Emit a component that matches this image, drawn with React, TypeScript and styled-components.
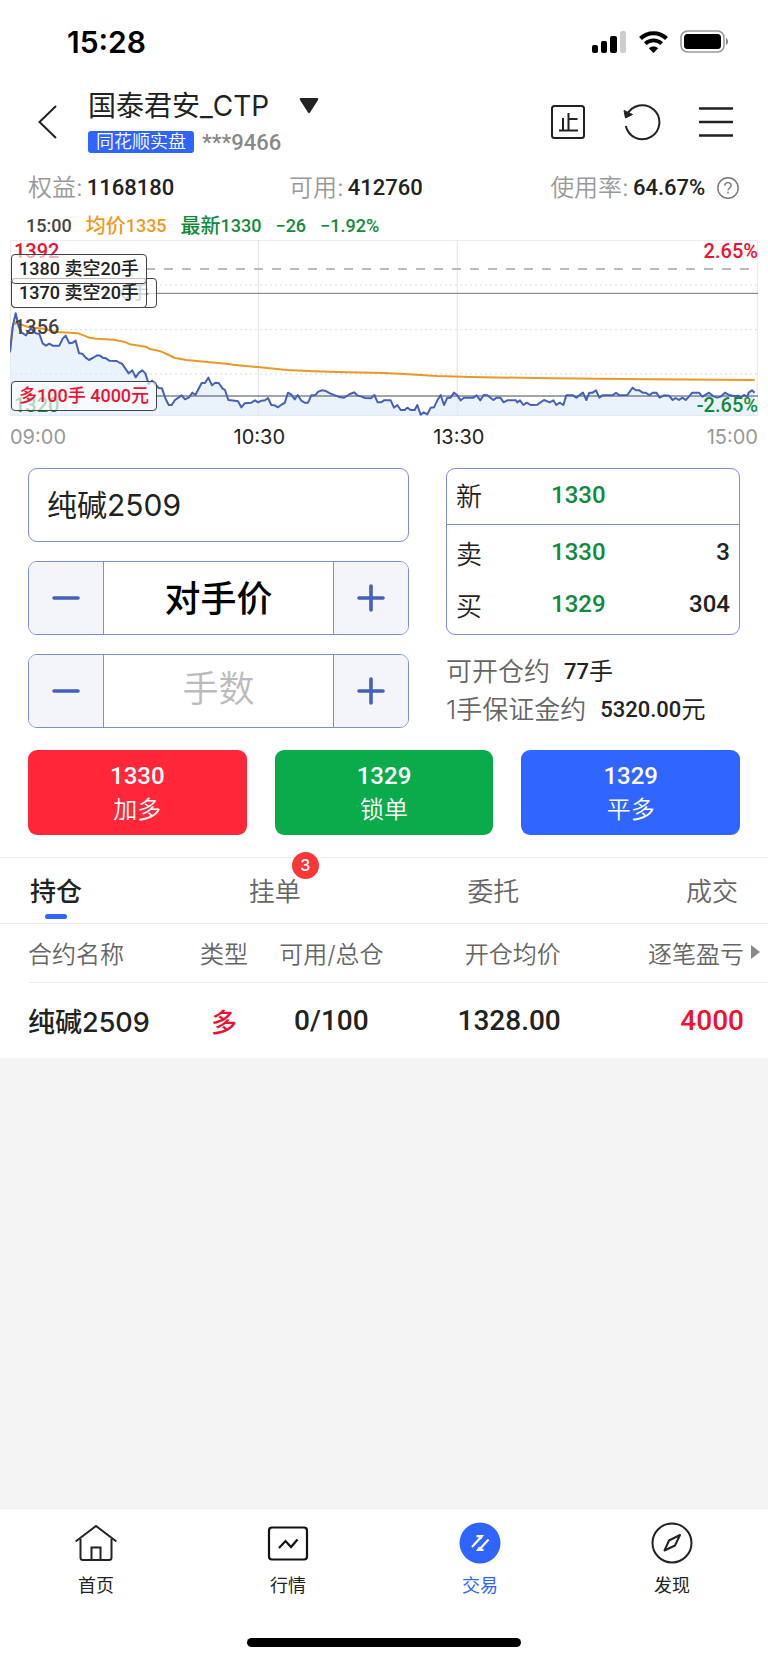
import React, { useState } from "react";
import styled, { createGlobalStyle, css } from "styled-components";

const color = {
  ink: "#222222",
  mid: "#666666",
  soft: "#999999",
  red: "#f01030",
  green: "#128a3c",
  orange: "#ee9a1c",
  blue: "#2f64ff",
  frame: "#7b8fd0",
  rule: "#eeeeee",
};

const cjk = `"Noto Sans CJK SC", sans-serif`;
const textFont = `Inter, ${cjk}`;
const numFont = `Roboto, ${cjk}`;

const GlobalStyle = createGlobalStyle`
  *, *::before, *::after { box-sizing: border-box; }
  body { margin: 0; background: #ffffff; }
  button, input { font: inherit; color: inherit; margin: 0; padding: 0; border: 0; background: none; border-radius: 0; }
  button { cursor: pointer; }
  a { color: inherit; text-decoration: none; }
  svg { display: block; }
`;

const Page = styled.div`
  min-height: 100vh;
  display: flex;
  flex-direction: column;
  background: #ffffff;
  color: ${color.ink};
  font-family: ${textFont};
  font-size: 24px;
`;

const Num = styled.span<{ $size?: number; $color?: string }>`
  font-family: ${numFont};
  font-weight: 500;
  font-size: ${(p) => p.$size ?? 22}px;
  ${(p) => p.$color && css`color: ${p.$color};`}
`;

/* ---------- status bar ---------- */

const StatusBar = styled.div`
  height: 84px;
  padding: 0 38px 0 67px;
  display: flex;
  align-items: center;
  justify-content: space-between;
  color: #000000;
`;

const Clock = styled.time`
  font-size: 30px;
  font-weight: 600;
  line-height: 36px;
`;

const StatusIcons = styled.div`
  display: flex;
  align-items: center;
  gap: 12px;
`;

/* ---------- header ---------- */

const Header = styled.header`
  padding: 6px 35px 20px 38px;
  display: flex;
  align-items: center;
`;

const Account = styled.div`
  flex: 1;
  margin-left: 31px;
  display: flex;
  flex-direction: column;
  gap: 8px;
`;

const AccountPicker = styled.button`
  align-self: flex-start;
  display: flex;
  align-items: center;
  gap: 30px;
  font-size: 28px;
  line-height: 32px;
`;

const AccountMeta = styled.div`
  display: flex;
  align-items: center;
  gap: 8px;
  height: 24px;
  color: #888888;
`;

const BrokerTag = styled.span`
  padding: 0 8px;
  border-radius: 3px;
  background: ${color.blue};
  color: #ffffff;
  font-size: 18px;
  line-height: 22px;
  font-weight: 350;
`;

const Tools = styled.div`
  display: flex;
  align-items: center;
  gap: 38px;
`;

/* ---------- funds ---------- */

const Funds = styled.dl`
  margin: 0;
  padding: 0 28px;
  display: grid;
  grid-template-columns: 11fr 11fr 8fr;
  line-height: 28px;
`;

const Fund = styled.div`
  display: flex;
  align-items: center;
  white-space: nowrap;

  dt { color: ${color.soft}; font-weight: 350; margin-right: 4px; }
  dd { margin: 0; display: flex; align-items: center; gap: 12px; }
`;

/* ---------- chart ---------- */

const Quote = styled.div`
  margin-top: 12px;
  padding: 0 26px;
  display: flex;
  align-items: center;
  gap: 14px;
  font-size: 20px;
  line-height: 24px;
  font-weight: 500;
  white-space: nowrap;
`;

const QuoteItem = styled.span<{ $color: string }>`
  display: flex;
  align-items: center;
  color: ${(p) => p.$color};
`;

const Chart = styled.section`
  margin: 2px 10px 0;
`;

const Plot = styled.div`
  position: relative;
  height: 176px;

  > svg { width: 100%; height: 100%; }
`;

const AxisValue = styled.span<{ $top: number; $side: "left" | "right"; $color: string }>`
  position: absolute;
  top: ${(p) => p.$top}px;
  ${(p) => (p.$side === "left" ? "left: 4px;" : "right: 0;")}
  color: ${(p) => p.$color};
  font: 500 20px/22px ${numFont};
`;

const OrderTag = styled.span<{ $top: number; $tone?: "red" | "ghost" }>`
  position: absolute;
  left: 1px;
  top: ${(p) => p.$top}px;
  padding: 0 7px;
  border: 1px solid #444444;
  border-radius: 4px;
  background: rgba(255, 255, 255, 0.66);
  font: 500 18px/28px ${numFont};
  color: ${(p) => (p.$tone === "red" ? color.red : p.$tone === "ghost" ? "#888888" : color.ink)};
  white-space: nowrap;
`;

const TimeAxis = styled.div`
  margin-top: 7px;
  display: grid;
  grid-template-columns: 3fr 4fr 4fr 4fr;
  font-size: 20px;
  line-height: 28px;
  text-align: center;

  span:first-child { text-align: left; color: ${color.soft}; }
  span:last-child { text-align: right; color: ${color.soft}; }
`;

/* ---------- order form ---------- */

const OrderForm = styled.form`
  margin: 17px 28px 22px;
`;

const FormColumns = styled.div`
  display: grid;
  grid-template-columns: minmax(0, 381fr) minmax(0, 294fr);
  gap: 37px;
`;

const Fields = styled.div`
  display: flex;
  flex-direction: column;
  gap: 19px;
`;

const frame = css`
  border: 1px solid ${color.frame};
  border-radius: 9px;
  overflow: hidden;
`;

const ContractInput = styled.input`
  ${frame}
  width: 100%;
  height: 74px;
  padding: 0 18px 4px;
  font-size: 30px;
`;

const Stepper = styled.div`
  ${frame}
  height: 74px;
  display: flex;
`;

const StepButton = styled.button`
  width: 74px;
  display: grid;
  place-items: center;
  background: #f3f5fb;
`;

const StepInput = styled.input<{ $strong?: boolean }>`
  flex: 1;
  min-width: 0;
  padding-bottom: 4px;
  border: solid ${color.frame};
  border-width: 0 1px;
  text-align: center;
  font-size: 36px;
  font-weight: ${(p) => (p.$strong ? 500 : 350)};
  color: #000000;

  &::placeholder { color: #bbbbbb; opacity: 1; }
`;

const Book = styled.div`
  ${frame}
  height: 167px;
`;

const BookRow = styled.div`
  display: grid;
  grid-template-columns: 95px 1fr 1fr;
  align-items: center;
  padding: 2px 9px 0;
  height: 52px;
  font-size: 26px;
  font-weight: 350;

  > :last-child { text-align: right; }
`;

const LatestRow = styled(BookRow)`
  height: 56px;
  padding: 0 9px 4px;
  border-bottom: 1px solid ${color.frame};
`;

const Limits = styled.div`
  margin-top: 19px;
  display: grid;
  gap: 2px;
`;

const Limit = styled.div`
  height: 36px;
  display: flex;
  align-items: center;
  gap: 14px;
  font-size: 26px;
  line-height: 36px;
  font-weight: 350;
  color: ${color.mid};
  white-space: nowrap;

  strong { display: flex; align-items: center; font-weight: 400; font-size: 24px; color: ${color.ink}; }
`;

const Actions = styled.div`
  margin-top: 22px;
  display: grid;
  grid-template-columns: repeat(3, 1fr);
  gap: 28px;
`;

const ActionButton = styled.button<{ $bg: string }>`
  height: 85px;
  display: flex;
  flex-direction: column;
  align-items: center;
  justify-content: center;
  border-radius: 9px;
  background: ${(p) => p.$bg};
  color: #ffffff;
  font-size: 24px;
  line-height: 34px;
  font-weight: 350;
`;

/* ---------- tabs and positions ---------- */

const Tabs = styled.div`
  height: 67px;
  padding: 0 30px;
  display: flex;
  justify-content: space-between;
  border: solid ${color.rule};
  border-width: 1px 0;
`;

const Tab = styled.button<{ $active: boolean }>`
  position: relative;
  padding-bottom: 2px;
  font-size: 26px;
  font-weight: ${(p) => (p.$active ? 500 : 350)};
  color: ${(p) => (p.$active ? color.ink : color.mid)};

  ${(p) =>
    p.$active &&
    css`
      &::after {
        content: "";
        position: absolute;
        left: 15px;
        bottom: 4px;
        width: 22px;
        height: 5px;
        border-radius: 3px;
        background: ${color.blue};
      }
    `}
`;

const Badge = styled.span`
  position: absolute;
  top: -6px;
  right: -18px;
  width: 27px;
  height: 27px;
  border-radius: 50%;
  background: #f83838;
  color: #ffffff;
  font-size: 16px;
  line-height: 27px;
  font-weight: 500;
`;

const Positions = styled.table`
  margin-left: 28px;
  width: calc(100% - 28px);
  table-layout: fixed;
  border-collapse: separate;
  border-spacing: 0;
  white-space: nowrap;
`;

const Cell = styled.td<{ $align?: string; $end?: boolean }>`
  height: 75px;
  padding: 0 ${(p) => (p.$end ? 24 : 0)}px 0 0;
  text-align: ${(p) => p.$align ?? "left"};
  font-size: 27px;
  font-weight: 500;
`;

const HeadCell = styled.th<{ $align?: string; $end?: boolean }>`
  height: 59px;
  padding: 0 ${(p) => (p.$end ? 8 : 0)}px 2px 0;
  border-bottom: 1px solid ${color.rule};
  text-align: ${(p) => p.$align ?? "left"};
  font-size: 24px;
  font-weight: 350;
  color: ${color.mid};
`;

const MoreHead = styled.span`
  display: flex;
  justify-content: flex-end;
  align-items: center;
  gap: 7px;
`;

const Empty = styled.div`
  flex: 1;
  background: #f4f4f4;
`;

/* ---------- bottom navigation ---------- */

const Nav = styled.nav`
  display: grid;
  grid-template-columns: repeat(4, 1fr);
  border-top: 1px solid ${color.rule};
`;

const NavLink = styled.a<{ $active?: boolean }>`
  padding-top: 13px;
  display: flex;
  flex-direction: column;
  align-items: center;
  gap: 10px;
  font-size: 18px;
  line-height: 24px;
  color: ${(p) => (p.$active ? color.blue : color.ink)};
`;

const HomeIndicator = styled.div`
  width: 274px;
  height: 9px;
  margin: 40px auto 16px;
  border-radius: 5px;
  background: #000000;
`;

/* ---------- chart data ---------- */

const PRICE =
  "30,365 38,290 47,250 56,290 65,308 78,316 92,295 100,303 108,310 118,312 128,340 138,347 148,341 158,347 178,347 188,326 197,317 208,340 218,338 227,332 237,370 247,371 257,383 267,390 278,384 291,376 300,377 308,383 318,385 328,392 350,393 360,399 366,401 386,430 397,421 407,442 417,428 427,421 436,430 446,462 456,452 476,474 486,475 497,507 506,525 515,525 525,510 545,496 555,508 567,502 577,488 586,495 605,459 615,459 625,443 636,466 646,458 656,459 668,476 675,480 685,510 705,512 714,514 724,532 734,520 754,518 765,511 774,517 784,512 795,511 804,504 814,525 824,526 834,532 844,524 854,519 864,488 874,494 884,508 893,495 904,512 914,518 924,518 934,496 945,496 955,485 965,481 975,482 990,490 1005,496 1015,500 1032,503 1050,492 1062,487 1072,496 1085,500 1095,504 1113,505 1123,495 1133,517 1143,517 1152,511 1172,511 1182,533 1192,525 1202,540 1214,540 1222,533 1232,540 1244,540 1252,525 1262,554 1271,547 1282,553 1292,533 1302,532 1312,511 1322,495 1332,525 1342,503 1352,503 1362,488 1372,496 1382,511 1392,503 1420,503 1430,496 1441,511 1451,495 1462,496 1480,510 1490,503 1501,503 1511,517 1522,511 1548,511 1552,517 1560,511 1570,525 1580,518 1592,525 1612,524 1632,510 1649,517 1660,511 1669,525 1679,518 1690,525 1699,496 1719,496 1729,503 1749,488 1759,510 1768,488 1778,488 1788,481 1798,503 1808,496 1838,496 1848,488 1858,496 1882,495 1898,473 1908,481 1918,481 1928,488 1938,488 1948,496 1958,488 1969,488 1979,503 1992,496 2007,497 2018,510 2027,504 2037,510 2047,503 2057,510 2064,503 2077,488 2097,488 2107,500 2127,488 2142,500 2152,503 2162,500 2175,488 2187,495 2202,498 2214,497 2222,503 2232,495 2242,500 2246,488 2256,481 2264,488";

const AVERAGE =
  "30,368 36,310 40,282 48,280 62,283 80,290 130,296 170,306 235,310 268,323 290,326 340,329 372,335 390,343 437,350 450,357 482,364 500,372 525,384 560,390 630,397 680,401 700,404 780,412 860,420 940,424 1040,427 1152,429 1212,432 1312,438 1412,441 1652,445 1952,448 2264,450";

function PriceChart() {
  const thin = { vectorEffect: "non-scaling-stroke" as const, fill: "none" };
  return (
    <svg viewBox="30 30 2244 528" preserveAspectRatio="none" role="img" aria-label="分时图">
      <rect x="31" y="31" width="2241" height="525" stroke="#e6e8f2" strokeWidth="1" {...thin} />
      <path d="M775 30V558M1372 30V558" stroke="#e0e2ea" strokeWidth="1" {...thin} />
      <path d="M30 165H2274M30 299H2274M30 432H2274" stroke="#dcdcdc" strokeWidth="1" strokeDasharray="2 3" {...thin} />
      <polygon points={`30,558 ${PRICE} 2264,558`} fill="#dce9fa" fillOpacity="0.6" />
      <path d="M438 117H2274" stroke="#bbbbbb" strokeWidth="2" strokeDasharray="9 9" {...thin} />
      <path d="M438 190H2274" stroke="#777777" strokeWidth="1" {...thin} />
      <path d="M467 498H2274" stroke="#444a55" strokeWidth="1" {...thin} />
      <polyline points={AVERAGE} stroke="#e79a26" strokeWidth="2" strokeLinejoin="round" {...thin} />
      <polyline points={PRICE} stroke="#4560b8" strokeWidth="2" strokeLinejoin="round" {...thin} />
    </svg>
  );
}

/* ---------- icons ---------- */

const SignalIcon = () => (
  <svg width="35" height="22" viewBox="0 0 35 22" aria-hidden="true">
    <rect x="0" y="14" width="6" height="8" rx="2" />
    <rect x="9" y="10" width="6" height="12" rx="2" />
    <rect x="18" y="5" width="7" height="17" rx="2" />
    <rect x="28" y="0" width="6" height="22" rx="2" fill="#cccccc" />
  </svg>
);

const WifiIcon = () => (
  <svg width="29" height="22" viewBox="0 0 29 22" aria-hidden="true">
    <path d="M1.500 7.500C8.800.500 20.200.500 27.500 7.500" fill="none" stroke="#000" strokeWidth="4.200" />
    <path d="M6.300 12.600C11 8.300 18 8.300 22.700 12.600" fill="none" stroke="#000" strokeWidth="3.800" />
    <path d="M14.500 22L9.800 17.200C12.400 14.800 16.600 14.800 19.200 17.200Z" />
  </svg>
);

const BatteryIcon = () => (
  <svg width="50" height="24" viewBox="0 0 50 24" aria-hidden="true">
    <rect x="1" y="1" width="43" height="21" rx="6.500" fill="none" stroke="#9a9a9a" strokeWidth="1.600" />
    <rect x="4" y="4" width="37" height="15" rx="3.500" />
    <path d="M46 8C48.800 9 48.800 14 46 15Z" fill="#8a8a8a" />
  </svg>
);

const BackIcon = () => (
  <svg width="19" height="34" viewBox="0 0 19 34" fill="none" stroke="#222" strokeWidth="2" aria-hidden="true">
    <path d="M18 1L1.500 17L18 33" />
  </svg>
);

const CaretIcon = () => (
  <svg width="20" height="16" viewBox="0 0 20 16" fill="#222" aria-hidden="true">
    <path d="M1.500 0H18.500Q20 .5 19 2L11 14.500Q10 16 9 14.500L1 2Q0 .5 1.500 0Z" />
  </svg>
);

const StopIcon = () => (
  <svg width="34" height="34" viewBox="0 0 34 34" fill="none" stroke="#222" strokeWidth="2" aria-hidden="true">
    <rect x="1" y="1" width="32" height="32" rx="2.500" />
    <path d="M8 25.500H27M12 13V25M17.500 8V25M17.500 14H26.500" />
  </svg>
);

const RefreshIcon = () => (
  <svg width="38" height="38" viewBox="0 0 38 38" fill="none" stroke="#222" strokeWidth="2" aria-hidden="true">
    <path d="M4 12A17 17 0 1 1 2.800 23" />
    <path d="M1 7.500L2.500 15L9.500 11.500Z" fill="#222" strokeLinejoin="round" strokeWidth="1" />
  </svg>
);

const MenuIcon = () => (
  <svg width="34" height="32" viewBox="0 0 34 32" stroke="#222" strokeWidth="2.400" aria-hidden="true">
    <path d="M0 2.500H34M0 16H34M0 29.500H34" />
  </svg>
);

const HelpIcon = () => (
  <svg width="22" height="22" viewBox="0 0 22 22" fill="none" stroke="#777" strokeWidth="1.400" aria-hidden="true">
    <circle cx="11" cy="11" r="10.200" />
    <path d="M7.800 8.700C7.800 4.600 14.200 4.600 14.200 8.600C14.200 11 11 11 11 13.300M11 14.800V16.600" />
  </svg>
);

const StepIcon = ({ plus }: { plus?: boolean }) => (
  <svg width="28" height="28" viewBox="0 0 28 28" stroke="#4560b8" strokeWidth="3.600" strokeLinecap="round" aria-hidden="true">
    <path d={plus ? "M2 14H26M14 2V26" : "M2 14H26"} />
  </svg>
);

const MoreIcon = () => (
  <svg width="9" height="14" viewBox="0 0 9 14" fill="#8a8a8a" aria-hidden="true">
    <path d="M0 0L9 7L0 14Z" />
  </svg>
);

const HomeIcon = () => (
  <svg width="42" height="42" viewBox="0 0 42 42" fill="none" stroke="#222" strokeWidth="2" aria-hidden="true">
    <path d="M.6 19.500L21 4L41.400 19.500" />
    <path d="M5.500 17V35.500Q5.500 38 8 38H34Q36.500 38 36.500 35.500V17M16.500 38V25.500H25.500V38" />
  </svg>
);

const MarketIcon = () => (
  <svg width="42" height="42" viewBox="0 0 42 42" fill="none" stroke="#111" strokeWidth="2.200" aria-hidden="true">
    <rect x="2" y="5.500" width="38" height="32" rx="3" />
    <path d="M12 26L18.500 19L24 25L30.500 17.500" />
  </svg>
);

const TradeIcon = () => (
  <svg width="42" height="42" viewBox="0 0 42 42" fill="none" aria-hidden="true">
    <circle cx="21" cy="21" r="20.500" fill={color.blue} />
    <path d="M13 25L22.500 14.500M29.500 17.500L20 28" stroke="#fff" strokeWidth="2.200" />
    <path d="M17.500 13H25L21.800 17.800L20.600 15.200H17.500ZM24.500 29H17L20.200 24.200L21.400 26.800H24.500Z" fill="#fff" />
  </svg>
);

const DiscoverIcon = () => (
  <svg width="42" height="42" viewBox="0 0 42 42" fill="none" stroke="#222" strokeWidth="2" aria-hidden="true">
    <circle cx="21" cy="21" r="19.500" />
    <path d="M29 13L18 18.500L13.500 28.500L24 23.500Z" strokeLinejoin="round" />
  </svg>
);

/* ---------- page ---------- */

const TABS = [
  { label: "持仓" },
  { label: "挂单", count: 3 },
  { label: "委托" },
  { label: "成交" },
];

const ACTIONS = [
  { price: "1330", label: "加多", bg: "#ff2738" },
  { price: "1329", label: "锁单", bg: "#0aab4b" },
  { price: "1329", label: "平多", bg: "#3165ff" },
];

const NAV = [
  { label: "首页", icon: <HomeIcon /> },
  { label: "行情", icon: <MarketIcon /> },
  { label: "交易", icon: <TradeIcon />, active: true },
  { label: "发现", icon: <DiscoverIcon /> },
];

export default function App() {
  const [tab, setTab] = useState(0);

  return (
    <Page>
      <GlobalStyle />

      <StatusBar>
        <Clock>15:28</Clock>
        <StatusIcons>
          <SignalIcon />
          <WifiIcon />
          <BatteryIcon />
        </StatusIcons>
      </StatusBar>

      <Header>
        <button type="button" aria-label="返回"><BackIcon /></button>
        <Account>
          <AccountPicker type="button">
            国泰君安_CTP
            <CaretIcon />
          </AccountPicker>
          <AccountMeta>
            <BrokerTag>同花顺实盘</BrokerTag>
            <Num>***9466</Num>
          </AccountMeta>
        </Account>
        <Tools>
          <button type="button" aria-label="止损"><StopIcon /></button>
          <button type="button" aria-label="刷新"><RefreshIcon /></button>
          <button type="button" aria-label="菜单"><MenuIcon /></button>
        </Tools>
      </Header>

      <Funds>
        <Fund>
          <dt>权益:</dt>
          <dd><Num>1168180</Num></dd>
        </Fund>
        <Fund>
          <dt>可用:</dt>
          <dd><Num>412760</Num></dd>
        </Fund>
        <Fund>
          <dt>使用率:</dt>
          <dd>
            <Num>64.67%</Num>
            <button type="button" aria-label="说明"><HelpIcon /></button>
          </dd>
        </Fund>
      </Funds>

      <Quote>
        <Num $size={18} $color="#444444">15:00</Num>
        <QuoteItem $color={color.orange}>均价<Num $size={18}>1335</Num></QuoteItem>
        <QuoteItem $color={color.green}>最新<Num $size={18}>1330</Num></QuoteItem>
        <Num $size={18} $color={color.green}>−26</Num>
        <Num $size={18} $color={color.green}>−1.92%</Num>
      </Quote>

      <Chart>
        <Plot>
          <PriceChart />
          <AxisValue $top={0} $side="left" $color={color.red}>1392</AxisValue>
          <AxisValue $top={76} $side="left" $color="#444444">1356</AxisValue>
          <AxisValue $top={154} $side="left" $color={color.green}>1320</AxisValue>
          <AxisValue $top={0} $side="right" $color={color.red}>2.65%</AxisValue>
          <AxisValue $top={154} $side="right" $color={color.green}>-2.65%</AxisValue>
          <OrderTag $top={38} $tone="ghost">1370 卖空100手</OrderTag>
          <OrderTag $top={38}>1370 卖空20手</OrderTag>
          <OrderTag $top={14}>1380 卖空20手</OrderTag>
          <OrderTag $top={141} $tone="red">多100手 4000元</OrderTag>
        </Plot>
        <TimeAxis>
          <span>09:00</span>
          <span>10:30</span>
          <span>13:30</span>
          <span>15:00</span>
        </TimeAxis>
      </Chart>

      <OrderForm onSubmit={(e) => e.preventDefault()}>
        <FormColumns>
          <Fields>
            <ContractInput aria-label="合约" defaultValue="纯碱2509" />
            <Stepper>
              <StepButton type="button" aria-label="降低价格"><StepIcon /></StepButton>
              <StepInput $strong aria-label="价格" defaultValue="对手价" />
              <StepButton type="button" aria-label="提高价格"><StepIcon plus /></StepButton>
            </Stepper>
            <Stepper>
              <StepButton type="button" aria-label="减少手数"><StepIcon /></StepButton>
              <StepInput aria-label="手数" placeholder="手数" />
              <StepButton type="button" aria-label="增加手数"><StepIcon plus /></StepButton>
            </Stepper>
          </Fields>
          <div>
            <Book>
              <LatestRow>
                <span>新</span>
                <Num $size={24} $color={color.green}>1330</Num>
                <span />
              </LatestRow>
              <BookRow>
                <span>卖</span>
                <Num $size={24} $color={color.green}>1330</Num>
                <Num $size={24}>3</Num>
              </BookRow>
              <BookRow>
                <span>买</span>
                <Num $size={24} $color={color.green}>1329</Num>
                <Num $size={24}>304</Num>
              </BookRow>
            </Book>
            <Limits>
              <Limit>
                可开仓约 <strong><Num>77</Num>手</strong>
              </Limit>
              <Limit>
                1手保证金约 <strong><Num>5320.00</Num>元</strong>
              </Limit>
            </Limits>
          </div>
        </FormColumns>
        <Actions>
          {ACTIONS.map((a) => (
            <ActionButton key={a.label} type="button" $bg={a.bg}>
              <Num $size={24}>{a.price}</Num>
              {a.label}
            </ActionButton>
          ))}
        </Actions>
      </OrderForm>

      <Tabs role="tablist">
        {TABS.map((t, i) => (
          <Tab key={t.label} type="button" role="tab" aria-selected={tab === i} $active={tab === i} onClick={() => setTab(i)}>
            {t.label}
            {t.count && <Badge>{t.count}</Badge>}
          </Tab>
        ))}
      </Tabs>

      <Positions>
        <colgroup>
          <col style={{ width: "21%" }} />
          <col style={{ width: "11%" }} />
          <col style={{ width: "18%" }} />
          <col style={{ width: "22%" }} />
          <col style={{ width: "28%" }} />
        </colgroup>
        <thead>
          <tr>
            <HeadCell>合约名称</HeadCell>
            <HeadCell $align="center">类型</HeadCell>
            <HeadCell $align="center">可用/总仓</HeadCell>
            <HeadCell $align="right">开仓均价</HeadCell>
            <HeadCell $end>
              <MoreHead>逐笔盈亏<MoreIcon /></MoreHead>
            </HeadCell>
          </tr>
        </thead>
        <tbody>
          <tr>
            <Cell>纯碱2509</Cell>
            <Cell $align="center"><Num $size={26} $color={color.red}>多</Num></Cell>
            <Cell $align="center"><Num $size={28}>0/100</Num></Cell>
            <Cell $align="right"><Num $size={28}>1328.00</Num></Cell>
            <Cell $align="right" $end><Num $size={28} $color={color.red}>4000</Num></Cell>
          </tr>
        </tbody>
      </Positions>

      <Empty />

      <Nav>
        {NAV.map((n) => (
          <NavLink key={n.label} href="#" $active={n.active} aria-current={n.active ? "page" : undefined}>
            {n.icon}
            {n.label}
          </NavLink>
        ))}
      </Nav>
      <HomeIndicator />
    </Page>
  );
}
